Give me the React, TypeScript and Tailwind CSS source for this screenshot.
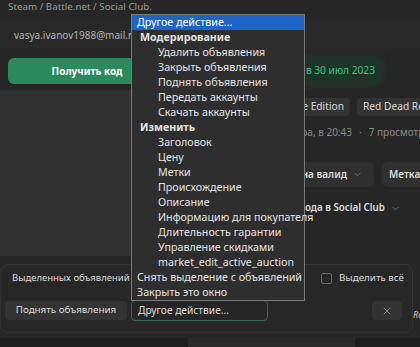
import { ChevronDown, X } from 'lucide-react'

const options = [
    { label: 'Другое действие...', kind: 'top', active: true },
    { label: 'Модерирование', kind: 'group' },
    { label: 'Удалить объявления', kind: 'item' },
    { label: 'Закрыть объявления', kind: 'item' },
    { label: 'Поднять объявления', kind: 'item' },
    { label: 'Передать аккаунты', kind: 'item' },
    { label: 'Скачать аккаунты', kind: 'item' },
    { label: 'Изменить', kind: 'group' },
    { label: 'Заголовок', kind: 'item' },
    { label: 'Цену', kind: 'item' },
    { label: 'Метки', kind: 'item' },
    { label: 'Происхождение', kind: 'item' },
    { label: 'Описание', kind: 'item' },
    { label: 'Информацию для покупателя', kind: 'item' },
    { label: 'Длительность гарантии', kind: 'item' },
    { label: 'Управление скидками', kind: 'item' },
    { label: 'market_edit_active_auction', kind: 'item' },
    { label: 'Снять выделение с объявлений', kind: 'top' },
    { label: 'Закрыть это окно', kind: 'top' },
]

function SelectPopup() {
    return (
        <div className="absolute left-[131px] top-[14px] w-[174px] border border-[#7a7a7a] bg-[#2e2e2e] text-[10.7px] text-[#e4e4e4]">
            {options.map(({ label, kind, active }) => (
                <div
                    key={label}
                    className={
                        kind === 'group'
                            ? 'h-[15px] whitespace-nowrap pl-[8px] font-bold leading-[15px]'
                            : kind === 'item'
                                ? 'h-[15px] whitespace-nowrap pl-[26px] leading-[15px]'
                                : active
                                    ? 'h-[15px] whitespace-nowrap bg-[#1f63c8] pl-[5px] leading-[15px] text-white'
                                    : 'h-[15px] whitespace-nowrap pl-[5px] leading-[15px]'
                    }
                >
                    {label}
                </div>
            ))}
        </div>
    )
}

export default function App() {
    return (
        <div className="relative h-[347px] w-[420px] overflow-hidden bg-[#262626] font-['Noto_Sans',sans-serif] text-[10.2px] text-[#dcdcdc]">
            <p className="pl-2 text-[9.8px] leading-[14px] text-[#9a9a9a]">Steam / Battle.net / Social Club.</p>

            <div className="mt-[6px] flex h-[30px] items-center bg-[#282828] px-[14px] text-[10px] text-[#b4b4b4]">
                vasya.ivanov1988@mail.ru
            </div>

            <div className="mt-[8px] flex items-center pl-2">
                <button className="h-[26px] w-[158px] rounded-[6px] bg-[#2b8a5d] text-[10px] font-bold text-white">
                    Получить код
                </button>
                <div className="ml-auto mr-[38px] flex h-[26px] items-center rounded-[8px] bg-[#1d3529] pl-[8px] pr-[7px] text-[10.2px] text-[#3fc282] shadow-[0_0_8px_rgba(40,140,90,0.25)]">
                    Получен в 30 июл 2023
                </div>
            </div>

            <div className="mt-[6px] flex h-[166px]">
                <div className="w-[212px] bg-[#313131]" />
                <div className="min-w-0 flex-1 overflow-hidden pt-[8px]">
                    <div className="flex gap-[7px] whitespace-nowrap">
                        <span className="flex h-[18px] w-[138px] shrink-0 items-center justify-end rounded-[4px] bg-[#333333] px-[6px]">
                            Ultimate Edition
                        </span>
                        <span className="flex h-[18px] shrink-0 items-center rounded-[4px] bg-[#333333] px-[6px]">
                            Red Dead Redemption 2
                        </span>
                    </div>
                    <p className="mt-[9px] flex h-[14px] whitespace-nowrap text-[10px] leading-[14px] text-[#8a8a8a]">
                        <span className="w-[140px] shrink-0 text-right">Вчера, в 20:43</span>
                        <span className="mx-[7px]">·</span>
                        <span>7 просмотров</span>
                    </p>
                    <div className="mt-[23px] flex gap-[8px] whitespace-nowrap text-[10px] font-semibold">
                        <span className="flex h-[25px] w-[162px] shrink-0 items-center justify-end gap-[5px] rounded-[6px] bg-[#303030] pr-[11px]">
                            Проверка на валид
                            <ChevronDown size={11} strokeWidth={1.5} className="text-[#8a8a8a]" />
                        </span>
                        <span className="flex h-[25px] shrink-0 items-center gap-[5px] rounded-[6px] bg-[#303030] px-[7px]">
                            Метка продавца
                            <ChevronDown size={11} strokeWidth={1.5} className="text-[#8a8a8a]" />
                        </span>
                    </div>
                    <div className="mt-[14px] flex w-[189px] items-center justify-end gap-[5px] whitespace-nowrap text-[9.8px] font-semibold">
                        Наличие кода в Social Club
                        <ChevronDown size={11} strokeWidth={1.5} className="text-[#8a8a8a]" />
                    </div>
                </div>
            </div>

            <div className="mt-[8px] flex items-end text-[9.8px]">
                <div className="flex-1 rounded-[8px] border border-[#323232] bg-[#272727] pb-[11px] pt-[3px]">
                    <div className="flex h-[20px] items-center pl-[11px] pr-[8px]">
                        <span className="text-[9.5px]">Выделенных объявлений</span>
                        <label className="ml-auto flex items-center gap-[7px]">
                            <span className="h-[11px] w-[11px] rounded-[2px] border border-[#6a6a6a]" />
                            Выделить всё
                        </label>
                    </div>
                    <div className="mt-[12px] flex items-center pl-[4px] pr-[10px]">
                        <button className="h-[19px] w-[122px] rounded-[4px] bg-[#333333] text-[#dcdcdc]">
                            Поднять объявления
                        </button>
                        <div className="ml-[4px] flex h-[21px] w-[137px] items-center rounded-[4px] border border-[#2d6a50] bg-[#262626] pl-[6px] text-[10.2px]">
                            Другое действие...
                        </div>
                        <button className="ml-auto flex h-[19px] w-[30px] items-center justify-center rounded-[4px] bg-[#333333] text-[#a8a8a8]">
                            <X size={12} strokeWidth={1.5} />
                        </button>
                    </div>
                </div>
                <div className="w-[7px] overflow-visible whitespace-nowrap pb-[14px] text-[9px] italic leading-[9px] text-[#cfcfcf]">
                    Red
                </div>
            </div>

            <div className="mt-[5px] flex h-[12px] bg-[#1e1e1e]">
                <div className="ml-[188px] w-[167px] bg-[#2a2a2a]" />
            </div>

            <SelectPopup />
        </div>
    )
}
